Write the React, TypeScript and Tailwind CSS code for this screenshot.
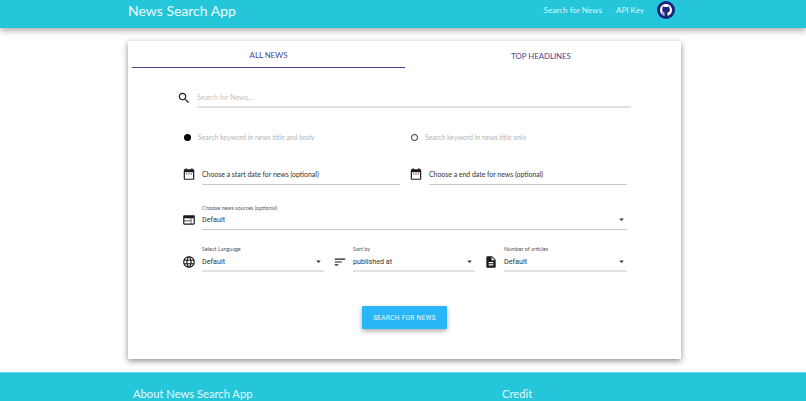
import type { ReactNode } from "react";

const icons = {
  search:
    "M15.5 14h-.79l-.28-.27C15.41 12.59 16 11.11 16 9.5 16 5.91 13.09 3 9.5 3S3 5.91 3 9.5 5.91 16 9.5 16c1.61 0 3.09-.59 4.23-1.57l.27.28v.79l5 4.99L20.49 19l-4.99-5zm-6 0C7.01 14 5 11.99 5 9.5S7.01 5 9.5 5 14 7.01 14 9.5 11.99 14 9.5 14z",
  date: "M9 11H7v2h2v-2zm4 0h-2v2h2v-2zm4 0h-2v2h2v-2zm2-7h-1V2h-2v2H8V2H6v2H5c-1.11 0-1.99.9-1.99 2L3 20c0 1.1.89 2 2 2h14c1.1 0 2-.9 2-2V6c0-1.1-.9-2-2-2zm0 16H5V9h14v11z",
  web: "M20 4H4c-1.1 0-1.99.9-1.99 2L2 18c0 1.1.9 2 2 2h16c1.1 0 2-.9 2-2V6c0-1.1-.9-2-2-2zm-5 14H4v-4h11v4zm0-5H4V9h11v4zm5 5h-4V9h4v9z",
  language:
    "M11.99 2C6.47 2 2 6.48 2 12s4.47 10 9.99 10C17.52 22 22 17.52 22 12S17.52 2 11.99 2zm6.93 6h-2.95c-.32-1.25-.78-2.45-1.38-3.56 1.84.63 3.37 1.91 4.33 3.56zM12 4.04c.83 1.2 1.48 2.53 1.91 3.96h-3.82c.43-1.43 1.08-2.76 1.91-3.96zM4.26 14C4.1 13.36 4 12.69 4 12s.1-1.36.26-2h3.38c-.08.66-.14 1.32-.14 2 0 .68.06 1.34.14 2H4.26zm.82 2h2.95c.32 1.25.78 2.45 1.38 3.56-1.84-.63-3.37-1.9-4.33-3.56zm2.95-8H5.08c.96-1.66 2.49-2.93 4.33-3.56C8.81 5.55 8.35 6.75 8.03 8zM12 19.96c-.83-1.2-1.48-2.53-1.91-3.96h3.82c-.43 1.43-1.08 2.76-1.91 3.96zM14.34 14H9.66c-.09-.66-.16-1.32-.16-2 0-.68.07-1.35.16-2h4.68c.09.65.16 1.32.16 2 0 .68-.07 1.34-.16 2zm.25 5.56c.6-1.11 1.06-2.31 1.38-3.56h2.95c-.96 1.65-2.49 2.93-4.33 3.56zM16.36 14c.08-.66.14-1.32.14-2 0-.68-.06-1.34-.14-2h3.38c.16.64.26 1.31.26 2s-.1 1.36-.26 2h-3.38z",
  sort: "M3 18h6v-2H3v2zM3 6v2h18V6H3zm0 7h12v-2H3v2z",
  file: "M14 2H6c-1.1 0-1.99.9-1.99 2L4 20c0 1.1.89 2 2 2h12c1.1 0 2-.9 2-2V8l-6-6zm2 16H8v-2h8v2zm0-4H8v-2h8v2zm-3-5V3.5L18.5 9H13z",
};

function Icon({ d }: { d: string }) {
  return (
    <svg viewBox="0 0 24 24" className="h-[14px] w-[14px] shrink-0 fill-[#1b1b1b]">
      <path d={d} />
    </svg>
  );
}

function Caret() {
  return (
    <svg viewBox="0 0 24 24" className="mt-[1px] h-[11px] w-[11px] shrink-0 fill-[#333]">
      <path d="M7 10l5 5 5-5z" />
    </svg>
  );
}

function GithubBadge() {
  return (
    <span className="flex h-[18px] w-[18px] items-center justify-center rounded-full bg-[#1a237e]">
      <svg viewBox="0 0 16 16" className="h-[12px] w-[12px] fill-white">
        <path d="M8 0C3.58 0 0 3.58 0 8c0 3.54 2.29 6.53 5.47 7.59.4.07.55-.17.55-.38 0-.19-.01-.82-.01-1.49-2.01.37-2.53-.49-2.69-.94-.09-.23-.48-.94-.82-1.13-.28-.15-.68-.52-.01-.53.63-.01 1.08.58 1.23.82.72 1.21 1.87.87 2.33.66.07-.52.28-.87.51-1.07-1.78-.2-3.64-.89-3.64-3.95 0-.87.31-1.59.82-2.15-.08-.2-.36-1.02.08-2.12 0 0 .67-.21 2.2.82.64-.18 1.32-.27 2-.27s1.36.09 2 .27c1.53-1.04 2.2-.82 2.2-.82.44 1.1.16 1.92.08 2.12.51.56.82 1.27.82 2.15 0 3.07-1.87 3.75-3.65 3.95.29.25.54.73.54 1.48 0 1.07-.01 1.93-.01 2.2 0 .21.15.46.55.38A8.01 8.01 0 0 0 16 8c0-4.42-3.58-8-8-8z" />
      </svg>
    </span>
  );
}

function Radio({ checked, label }: { checked?: boolean; label: string }) {
  return (
    <div className="flex items-center">
      <span
        className={
          checked
            ? "h-[7px] w-[7px] rounded-full bg-black"
            : "h-[7px] w-[7px] rounded-full border border-[#222] bg-white"
        }
      />
      <span className="ml-[7px] text-[6.9px] text-[#b5b5b5]">{label}</span>
    </div>
  );
}

function DateField({ label }: { label: string }) {
  return (
    <div className="flex w-[218px] items-start">
      <div className="mt-[3px]">
        <Icon d={icons.date} />
      </div>
      <div className="ml-[6px] h-[21px] flex-1 border-b border-[#c9c9c9] pt-[4px] text-[6.9px] leading-[12px] text-[#333]">
        {label}
      </div>
    </div>
  );
}

function SelectField({
  icon,
  label,
  value,
  box,
  iconTop,
  className,
}: {
  icon: string;
  label: string;
  value: ReactNode;
  box: string;
  iconTop: string;
  className: string;
}) {
  return (
    <div className={`flex items-start ${className}`}>
      <div className={iconTop}>
        <Icon d={icon} />
      </div>
      <div className="ml-[6px] flex-1">
        <div className="h-[10px] text-[5.45px] leading-[10px] text-[#555]">{label}</div>
        <div className={`flex items-start justify-between ${box}`}>
          <span className="font-['Roboto',sans-serif] text-[7.2px] leading-[14px] text-[#333]">{value}</span>
          <Caret />
        </div>
      </div>
    </div>
  );
}

const rowBox = "h-[18px] border-b-2 border-[#e2e2e2] pt-[1px]";

export default function App() {
  return (
    <div className="flex h-[401px] w-[806px] flex-col overflow-hidden bg-white font-['Lato','Open_Sans',sans-serif] antialiased">
      <header className="z-10 flex h-[28px] shrink-0 items-start justify-between bg-[#26c6da] pl-[128px] pr-[131px] shadow-[0_3px_6px_rgba(0,0,0,0.3)]">
        <h1 className="text-[14px] font-normal leading-[21px] text-[#e8fbfd]">News Search App</h1>
        <nav className="flex items-center pt-[1px] text-[8.1px] text-[#d9f6fa]">
          <a className="leading-[18px]">Search for News</a>
          <a className="ml-[14px] leading-[18px]">API Key</a>
          <span className="ml-[13px]">
            <GithubBadge />
          </span>
        </nav>
      </header>

      <main className="mx-[128px] mt-[13px] h-[318px] w-[553px] shrink-0 bg-white px-[4px] shadow-[0_2px_6px_rgba(0,0,0,0.45)]">
        <div className="flex h-[27px] text-[7.8px] uppercase text-[#3f4496]">
          <div className="flex w-[273px] items-center justify-center border-b border-[#3f4496] pt-[4px]">All News</div>
          <div className="flex w-[272px] items-center justify-center pt-[4px]">Top Headlines</div>
        </div>

        <div className="ml-[45px] w-[454px]">
          <div className="mt-[20px] flex items-start">
            <div className="mt-[3px]">
              <Icon d={icons.search} />
            </div>
            <div className="ml-[6px] h-[20px] flex-1 border-b-2 border-[#e2e2e2] pt-[2px] text-[7.1px] leading-[15px] text-[#c4c4c4]">
              Search for News...
            </div>
          </div>

          <div className="mt-[24px] flex pl-[7px]">
            <div className="w-[227px]">
              <Radio checked label="Search keyword in news title and body" />
            </div>
            <Radio label="Search keyword in news title only" />
          </div>

          <div className="mt-[22px] flex gap-[9px] pl-[5px]">
            <DateField label="Choose a start date for news (optional)" />
            <DateField label="Choose a end date for news (optional)" />
          </div>

          <SelectField
            className="mt-[18px] ml-[5px] w-[445px]"
            icon={icons.web}
            iconTop="mt-[10px]"
            label="Choose news sources (optional)"
            value="Default"
            box="h-[17px] border-b border-[#c9c9c9]"
          />

          <div className="mt-[14px] ml-[5px] flex w-[445px] gap-[9px]">
            <SelectField className="w-[142px]" icon={icons.language} iconTop="mt-[11px]" box={rowBox} label="Select Language" value="Default" />
            <SelectField className="w-[142px]" icon={icons.sort} iconTop="mt-[11px]" box={rowBox} label="Sort by" value="published at" />
            <SelectField className="w-[143px]" icon={icons.file} iconTop="mt-[11px]" box={rowBox} label="Number of articles" value="Default" />
          </div>
        </div>

        <div className="mt-[34px] flex justify-center">
          <button className="h-[23px] w-[85px] rounded-[1px] bg-[#29b6f6] font-['Roboto',sans-serif] text-[6.7px] uppercase tracking-[0.2px] text-[#e6f7ff] shadow-[0_2px_5px_rgba(0,0,0,0.35)]">
            Search for News
          </button>
        </div>
      </main>

      <footer className="mt-[13px] flex h-[29px] shrink-0 items-start border-t border-[#5fdbe9] bg-[#26c6da] pl-[133px] text-[11.2px] text-[#e3fafc]">
        <h2 className="mt-[13px] w-[369px] leading-[16px]">About News Search App</h2>
        <h2 className="mt-[13px] leading-[16px]">Credit</h2>
      </footer>
    </div>
  );
}
